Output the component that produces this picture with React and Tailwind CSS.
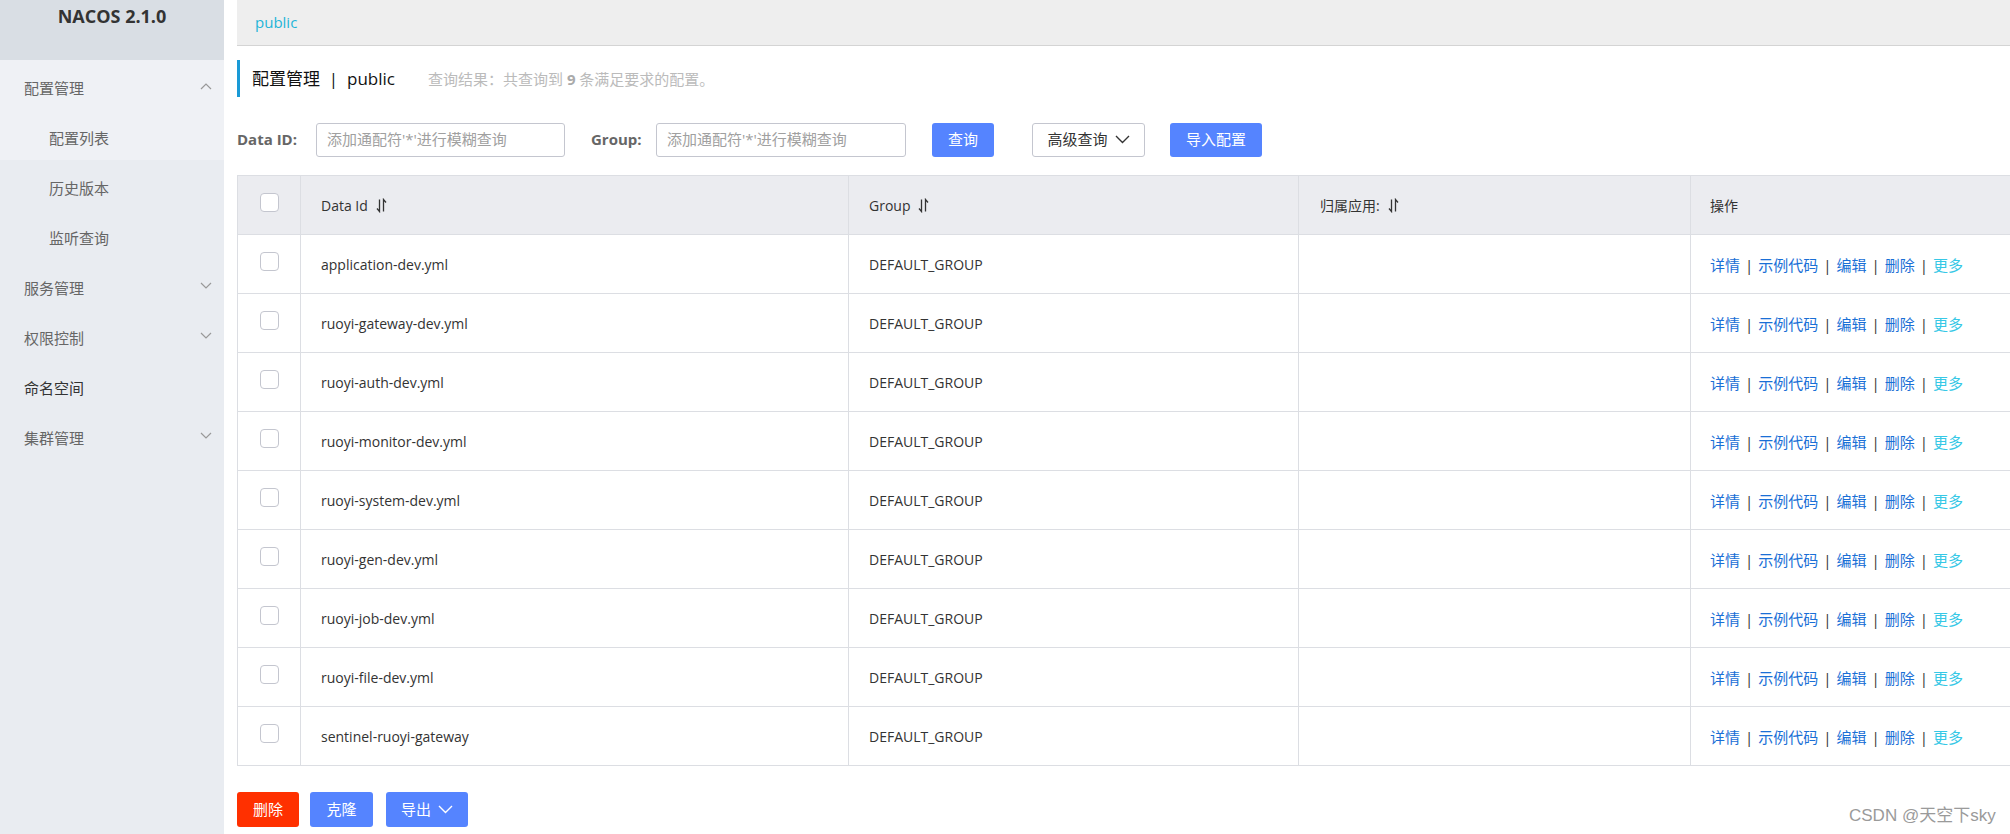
import React from "react";

const FONT = { fontFamily: '"Open Sans", "Noto Sans CJK SC", sans-serif' };

const rows = [
  "application-dev.yml",
  "ruoyi-gateway-dev.yml",
  "ruoyi-auth-dev.yml",
  "ruoyi-monitor-dev.yml",
  "ruoyi-system-dev.yml",
  "ruoyi-gen-dev.yml",
  "ruoyi-job-dev.yml",
  "ruoyi-file-dev.yml",
  "sentinel-ruoyi-gateway",
];

function Chevron({ up = false, className = "" }) {
  return (
    <svg width="12" height="8" viewBox="0 0 12 8" className={className}>
      <polyline
        points={up ? "1,7 6,2 11,7" : "1,1 6,6 11,1"}
        fill="none"
        stroke="currentColor"
        strokeWidth="1.2"
      />
    </svg>
  );
}

function BigChevron({ className = "" }) {
  return (
    <svg width="15" height="9" viewBox="0 0 15 9" className={className}>
      <polyline points="1,1 7.5,7.5 14,1" fill="none" stroke="currentColor" strokeWidth="1.4" />
    </svg>
  );
}

function SortIcon() {
  return (
    <svg width="11" height="15" viewBox="0 0 11 15" className="ml-[8px] text-[#333]">
      <path d="M3.5 1.5 V13.5 L1 10.5" fill="none" stroke="currentColor" strokeWidth="1.3" />
      <path d="M7.5 13.5 V1.5 L10 4.5" fill="none" stroke="currentColor" strokeWidth="1.3" />
    </svg>
  );
}

function Checkbox() {
  return <div className="w-[19px] h-[19px] rounded-[4px] border border-[#c4c6cf] bg-white mb-[5px]" />;
}

function SideItem({ children, sub = false, chevron = null, dark = false }) {
  return (
    <div className={`h-[50px] pt-[6px] flex items-center justify-between pr-[12px] ${sub ? "pl-[49px]" : "pl-[24px]"}`}>
      <span className={`text-[15px] ${dark ? "text-[#333]" : "text-[#666]"}`}>{children}</span>
      {chevron === "up" && <Chevron up className="text-[#999] mb-[4px]" />}
      {chevron === "down" && <Chevron className="text-[#999] mb-[4px]" />}
    </div>
  );
}

function Sep() {
  return <span className="text-[#333] mx-[5px]">|</span>;
}

export default function App() {
  return (
    <div className="relative flex w-[2010px] h-[834px] overflow-hidden bg-white" style={FONT}>
      {/* Sidebar */}
      <aside className="w-[224px] shrink-0 h-full bg-[#e9ecf1] flex flex-col">
        <div className="h-[60px] bg-[#d9dee4] flex justify-center pt-[3px]">
          <span className="text-[18px] leading-[26px] font-bold text-[#333]">NACOS 2.1.0</span>
        </div>
        <div className="bg-[#eff1f5]">
          <SideItem chevron="up">配置管理</SideItem>
          <SideItem sub>配置列表</SideItem>
        </div>
        <SideItem sub>历史版本</SideItem>
        <SideItem sub>监听查询</SideItem>
        <SideItem chevron="down">服务管理</SideItem>
        <SideItem chevron="down">权限控制</SideItem>
        <SideItem dark>命名空间</SideItem>
        <SideItem chevron="down">集群管理</SideItem>
      </aside>

      {/* Main */}
      <main className="flex-1 ml-[13px] flex flex-col min-w-0">
        <div className="h-[46px] shrink-0 bg-[#eeeeee] border-b border-[#d4d4d4] flex items-center pl-[18px]">
          <span className="text-[15px] text-[#1fb5d8]">public</span>
        </div>

        <div className="mt-[14px] h-[37px] border-l-[3px] border-[#1a9ad6] flex items-center pl-[12px]">
          <span className="text-[17px] text-[#111]">配置管理&nbsp;&nbsp;|&nbsp;&nbsp;public</span>
          <span className="ml-[33px] text-[15px] text-[#bbbbbb] mt-[2px]">
            查询结果：共查询到 <b className="text-[#aaa]">9</b> 条满足要求的配置。
          </span>
        </div>

        <div className="mt-[25px] h-[35px] flex items-center">
          <span className="w-[62px] text-[15px] font-bold text-[#666] whitespace-nowrap">Data ID:</span>
          <div className="ml-[17px] w-[249px] h-[34px] border border-[#c4c6cf] rounded-[3px] flex items-center pl-[10px]">
            <span className="text-[15px] text-[#a0a0a0]">添加通配符'*'进行模糊查询</span>
          </div>
          <span className="ml-[26px] w-[65px] text-[15px] font-bold text-[#666]">Group:</span>
          <div className="w-[250px] h-[34px] border border-[#c4c6cf] rounded-[3px] flex items-center pl-[10px]">
            <span className="text-[15px] text-[#a0a0a0]">添加通配符'*'进行模糊查询</span>
          </div>
          <div className="ml-[26px] w-[62px] h-[34px] rounded-[3px] bg-[#5584ff] flex items-center justify-center text-white text-[15px]">
            查询
          </div>
          <div className="ml-[38px] w-[113px] h-[34px] rounded-[3px] border border-[#c4c6cf] bg-white flex items-center justify-center gap-[7px] text-[#333] text-[15px]">
            高级查询
            <BigChevron className="text-[#333]" />
          </div>
          <div className="ml-[25px] w-[92px] h-[34px] rounded-[3px] bg-[#5584ff] flex items-center justify-center text-white text-[15px]">
            导入配置
          </div>
        </div>

        {/* Table */}
        <div className="mt-[18px] border-t border-l border-[#dcdee3] w-[1773px]">
          <div className="grid grid-cols-[62px_548px_450px_392px_1fr] h-[59px] bg-[#ebecf0] border-b border-[#dcdee3] text-[14px] text-[#333]">
            <div className="flex items-center justify-center">
              <Checkbox />
            </div>
            <div className="flex items-center pl-[20px] border-l border-[#dcdee3]">
              Data Id <SortIcon />
            </div>
            <div className="flex items-center pl-[20px] border-l border-[#dcdee3]">
              Group <SortIcon />
            </div>
            <div className="flex items-center pl-[21px] border-l border-[#dcdee3]">
              归属应用:<SortIcon />
            </div>
            <div className="flex items-center pl-[19px] border-l border-[#dcdee3]">操作</div>
          </div>
          {rows.map((r) => (
            <div
              key={r}
              className="grid grid-cols-[62px_548px_450px_392px_1fr] h-[59px] bg-white border-b border-[#dcdee3] text-[14px] text-[#333]"
            >
              <div className="flex items-center justify-center">
                <Checkbox />
              </div>
              <div className="flex items-center pl-[20px] border-l border-[#dcdee3]">{r}</div>
              <div className="flex items-center pl-[20px] border-l border-[#dcdee3]">DEFAULT_GROUP</div>
              <div className="border-l border-[#dcdee3]" />
              <div className="flex items-center pl-[19px] border-l border-[#dcdee3] text-[15px] pt-[2px]">
                <span className="text-[#1a6fd6]">详情</span>
                <Sep />
                <span className="text-[#1a6fd6]">示例代码</span>
                <Sep />
                <span className="text-[#1a6fd6]">编辑</span>
                <Sep />
                <span className="text-[#1a6fd6]">删除</span>
                <Sep />
                <span className="text-[#36c8e6]">更多</span>
              </div>
            </div>
          ))}
        </div>

        <div className="mt-[26px] flex items-center gap-[11px]">
          <div className="w-[62px] h-[35px] rounded-[3px] bg-[#ff3000] flex items-center justify-center text-white text-[15px]">
            删除
          </div>
          <div className="w-[63px] h-[35px] rounded-[3px] bg-[#5584ff] flex items-center justify-center text-white text-[15px]">
            克隆
          </div>
          <div className="ml-[2px] w-[82px] h-[35px] rounded-[3px] bg-[#5584ff] flex items-center justify-center gap-[7px] text-white text-[15px]">
            导出
            <BigChevron className="text-white" />
          </div>
        </div>
      </main>

      <div
        className="absolute left-[1849px] top-[803px] text-[17px] text-[#9a9a9a]"
        style={{ fontFamily: '"Liberation Sans", "Noto Sans CJK SC", sans-serif' }}
      >
        CSDN @天空下sky
      </div>
    </div>
  );
}
